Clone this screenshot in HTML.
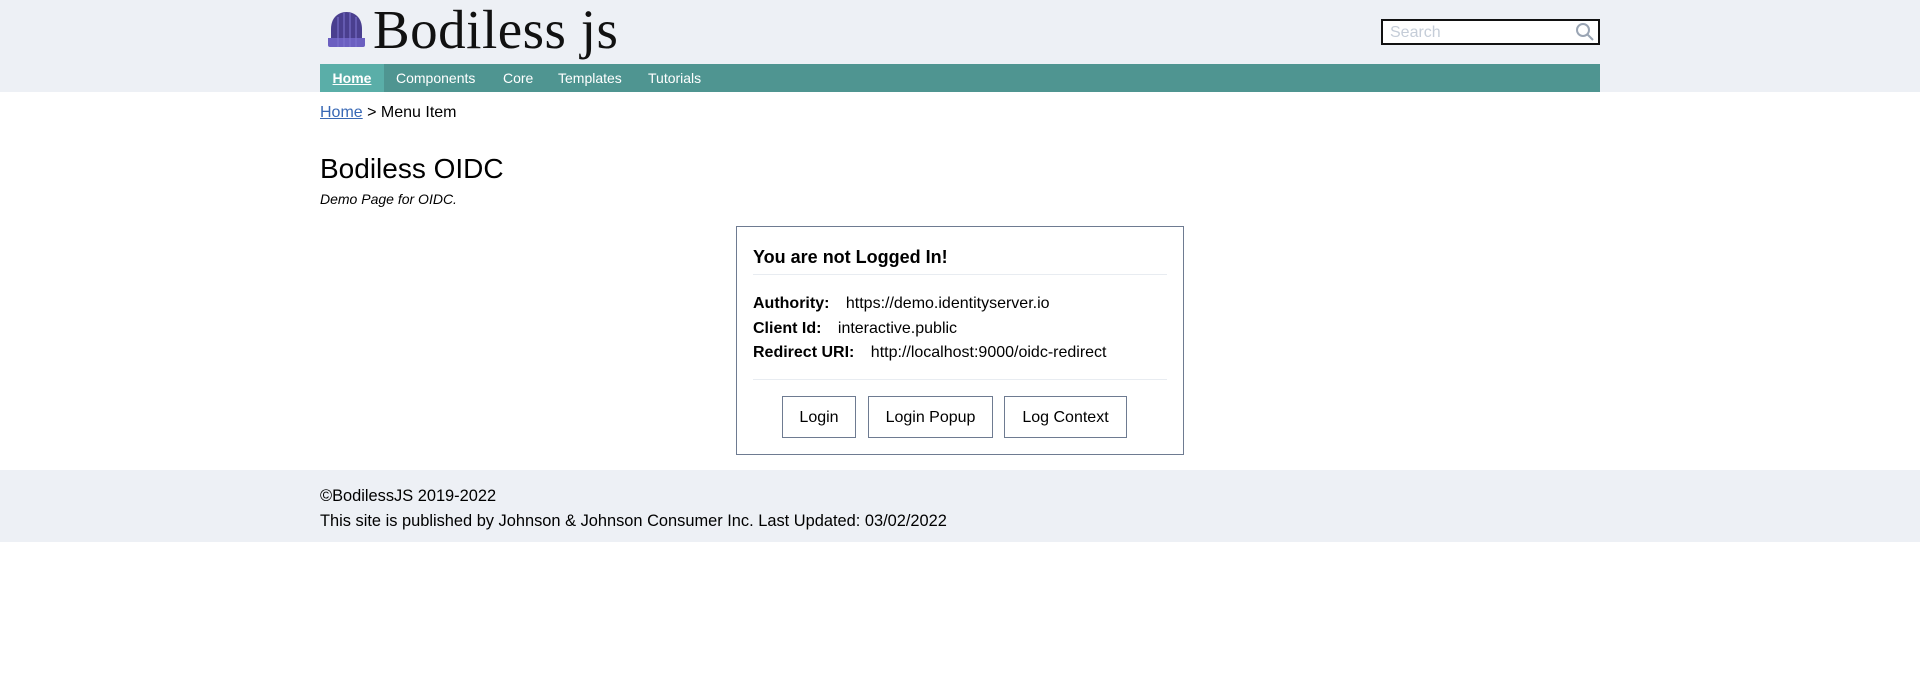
<!DOCTYPE html>
<html><head><meta charset="utf-8"><style>
*{box-sizing:border-box;margin:0;padding:0}
body{width:1920px;height:685px;background:#fff;font-family:"Liberation Sans",sans-serif;color:#000;position:relative;overflow:hidden}
.hdr{position:absolute;left:0;top:0;width:1920px;height:92px;background:#edf0f5}
.logo{position:absolute;left:373px;top:-2px;font-family:"Liberation Serif",serif;font-size:55px;color:#111;letter-spacing:0.5px}
.search{position:absolute;left:1381px;top:19px;width:219px;height:26px;border:2px solid #111;background:#fff;font-size:16px;color:#c5cdd8;padding:3px 7px;line-height:18px}
.nav{position:absolute;left:320px;top:64px;width:1280px;height:28px;background:#4f9591;color:#fff;font-size:14px}
.nav span{position:absolute;top:0;line-height:28px}
.bc{position:absolute;left:320px;top:104px;font-size:16px}
.bc a{color:#3868b5;text-decoration:underline}
h1{position:absolute;left:320px;top:153px;font-size:28px;font-weight:normal}
.sub{position:absolute;left:320px;top:191px;font-size:14px;font-style:italic}
.card{position:absolute;left:736px;top:226px;width:448px;height:229px;border:1px solid #6e7b91}
.card h2{position:absolute;left:16px;top:20px;font-size:18px;font-weight:bold}
.hr{position:absolute;left:16px;width:414px;height:1px;background:#e8ecf1}
.row{position:absolute;left:16px;font-size:16px}
.row b{margin-right:12px}
.btn{position:absolute;top:169px;height:42px;border:1px solid #6e7b91;font-size:16px;line-height:42px;text-align:center}
.ftr{position:absolute;left:0;top:470px;width:1920px;height:72px;background:#edf0f5;font-size:16.4px}
.ftr div{position:absolute;left:320px}
</style></head><body>
<div class="hdr">
<svg style="position:absolute;left:328px;top:12px" width="37" height="35" viewBox="0 0 37 35">
<path d="M3 35 V17 C3 6 10 0 18.5 0 C27 0 34 6 34 17 V35 Z" fill="#4a3f8f"/>
<path d="M0 26 H37 V33 Q37 35 35 35 H2 Q0 35 0 33Z" fill="#6b5fc0"/>
<g stroke="#7d72cf" stroke-width="1.5" opacity=".7"><line x1="10" y1="5" x2="10" y2="35"/><line x1="16" y1="1" x2="16" y2="35"/><line x1="22" y1="1" x2="22" y2="35"/><line x1="28" y1="5" x2="28" y2="35"/></g>
</svg>
<div class="logo">Bodiless js</div>
<div class="search">Search
<svg style="position:absolute;right:3px;top:1px" width="20" height="20" viewBox="0 0 20 20"><circle cx="8" cy="8" r="6" fill="none" stroke="#9aa5b4" stroke-width="2"/><line x1="12.5" y1="12.5" x2="18" y2="18" stroke="#9aa5b4" stroke-width="2"/></svg></div>
</div>
<div class="nav">
<span style="left:0;width:64px;background:#5aaea8;text-align:center;font-weight:bold;text-decoration:underline">Home</span>
<span style="left:76px">Components</span>
<span style="left:183px">Core</span>
<span style="left:238px">Templates</span>
<span style="left:328px">Tutorials</span>
</div>
<div class="bc"><a>Home</a> &gt; Menu Item</div>
<h1>Bodiless OIDC</h1>
<div class="sub">Demo Page for OIDC.</div>
<div class="card">
<h2>You are not Logged In!</h2>
<div class="hr" style="top:47px"></div>
<div class="row" style="top:68px"><b>Authority:</b> https://demo.identityserver.io</div>
<div class="row" style="top:93px"><b>Client Id:</b> interactive.public</div>
<div class="row" style="top:117px"><b>Redirect URI:</b> http://localhost:9000/oidc-redirect</div>
<div class="hr" style="top:152px"></div>
<div class="btn" style="left:45px;width:74px">Login</div>
<div class="btn" style="left:131px;width:125px">Login Popup</div>
<div class="btn" style="left:267px;width:123px">Log Context</div>
</div>
<div class="ftr">
<div style="top:17px">©BodilessJS 2019-2022</div>
<div style="top:42px">This site is published by Johnson &amp; Johnson Consumer Inc. Last Updated: 03/02/2022</div>
</div>
</body></html>
